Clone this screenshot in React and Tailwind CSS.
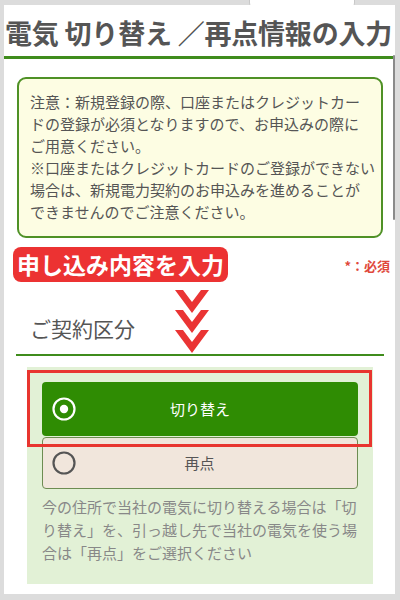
import React from 'react';

const font = { fontFamily: '"Noto Sans CJK JP", "Noto Sans", sans-serif' };

function Chevrons() {
  return (
    <svg className="absolute left-[171px] top-[285px]" width="34" height="64" viewBox="0 0 34 64">
      {[0, 20, 40].map((y) => (
        <polygon
          key={y}
          points={`0,${y} 8,${y} 17,${y + 12} 26,${y} 34,${y} 17,${y + 23}`}
          fill="#ea3434"
        />
      ))}
    </svg>
  );
}

function Radio({ checked }) {
  return (
    <svg width="24" height="24" viewBox="0 0 24 24" className="shrink-0">
      <circle cx="12" cy="12" r="10.5" fill="none" stroke={checked ? '#ffffff' : '#555555'} strokeWidth="2.2" />
      {checked && <circle cx="12" cy="12" r="4.2" fill="#ffffff" />}
    </svg>
  );
}

export default function App() {
  return (
    <div className="relative w-[400px] h-[600px] bg-[#dcdcdc] pt-[5px] pl-[4px] pr-[5px] pb-[6px]" style={font}>
      {/* partial box peeking at the top */}
      <div className="absolute left-[249px] top-[-6px] w-[106px] h-[14px] bg-white border border-[#c8c8c8] rounded-b-[5px]" />

      <div className="relative h-full bg-white overflow-hidden">
        {/* scrollbar */}
        <div className="absolute right-0 top-[50px] w-[2px] h-[165px] bg-[#8a8a8a] rounded-full" />

        {/* title */}
        <div className="pt-[8px] pb-[3px] pl-[1px] border-b-[3px] border-[#3f8c1c]">
          <h1 className="text-[27px] leading-[40px] font-bold text-[#555555] whitespace-nowrap tracking-[-0.2px]">
            電気 切り替え ／再点情報の入力
          </h1>
        </div>

        {/* notice */}
        <div className="mt-[18px] ml-[13px] mr-[12px] h-[161px] border-2 border-[#4f9126] rounded-[9px] bg-[#fdfde3] pt-[12px] pl-[11px]">
          <p className="text-[15px] leading-[22px] text-[#555555] whitespace-nowrap">
            注意：新規登録の際、口座またはクレジットカー<br />
            ドの登録が必須となりますので、お申込みの際に<br />
            ご用意ください。<br />
            ※口座またはクレジットカードのご登録ができない<br />
            場合は、新規電力契約のお申込みを進めることが<br />
            できませんのでご注意ください。
          </p>
        </div>

        {/* label row */}
        <div className="mt-[9px] ml-[9px] mr-[5px] flex items-end justify-between">
          <div className="h-[35px] px-[4px] bg-[#ec3232] rounded-[8px] flex items-center">
            <span className="text-[23px] leading-none font-bold text-white whitespace-nowrap">申し込み内容を入力</span>
          </div>
          <span className="mb-[7px] text-[13px] font-bold text-[#e0483c]">*：必須</span>
        </div>

        {/* heading */}
        <div className="mt-[31px] ml-[12px] mr-[11px] pb-[11px] pl-[14px] border-b-2 border-[#3f8c1c]">
          <h2 className="text-[21px] leading-[30px] text-[#555555]">ご契約区分</h2>
        </div>

        {/* options panel */}
        <div className="relative mt-[11px] ml-[23px] mr-[22px] h-[217px] bg-[#e2f1d6] pt-[15px] px-[15px]">
          <div className="h-[54px] bg-[#2f8c03] rounded-[4px] flex items-center pl-[10px]">
            <Radio checked />
            <span className="flex-1 text-center pr-[34px] text-[15px] text-white">切り替え</span>
          </div>
          <div className="mt-[1px] h-[52px] bg-[#f1e6dc] border border-[#6d8c52] rounded-[4px] flex items-center pl-[9px]">
            <Radio />
            <span className="flex-1 text-center pr-[34px] text-[15px] text-[#555555]">再点</span>
          </div>
          <p className="mt-[6px] text-[15px] leading-[23px] text-[#888888] whitespace-nowrap">
            今の住所で当社の電気に切り替える場合は「切<br />
            り替え」を、引っ越し先で当社の電気を使う場<br />
            合は「再点」をご選択ください
          </p>

          {/* red highlight frame */}
          <div className="absolute left-0 right-[1px] top-[3px] h-[77px] border-[3px] border-[#e8352f]" />
        </div>

        <Chevrons />
      </div>
    </div>
  );
}
